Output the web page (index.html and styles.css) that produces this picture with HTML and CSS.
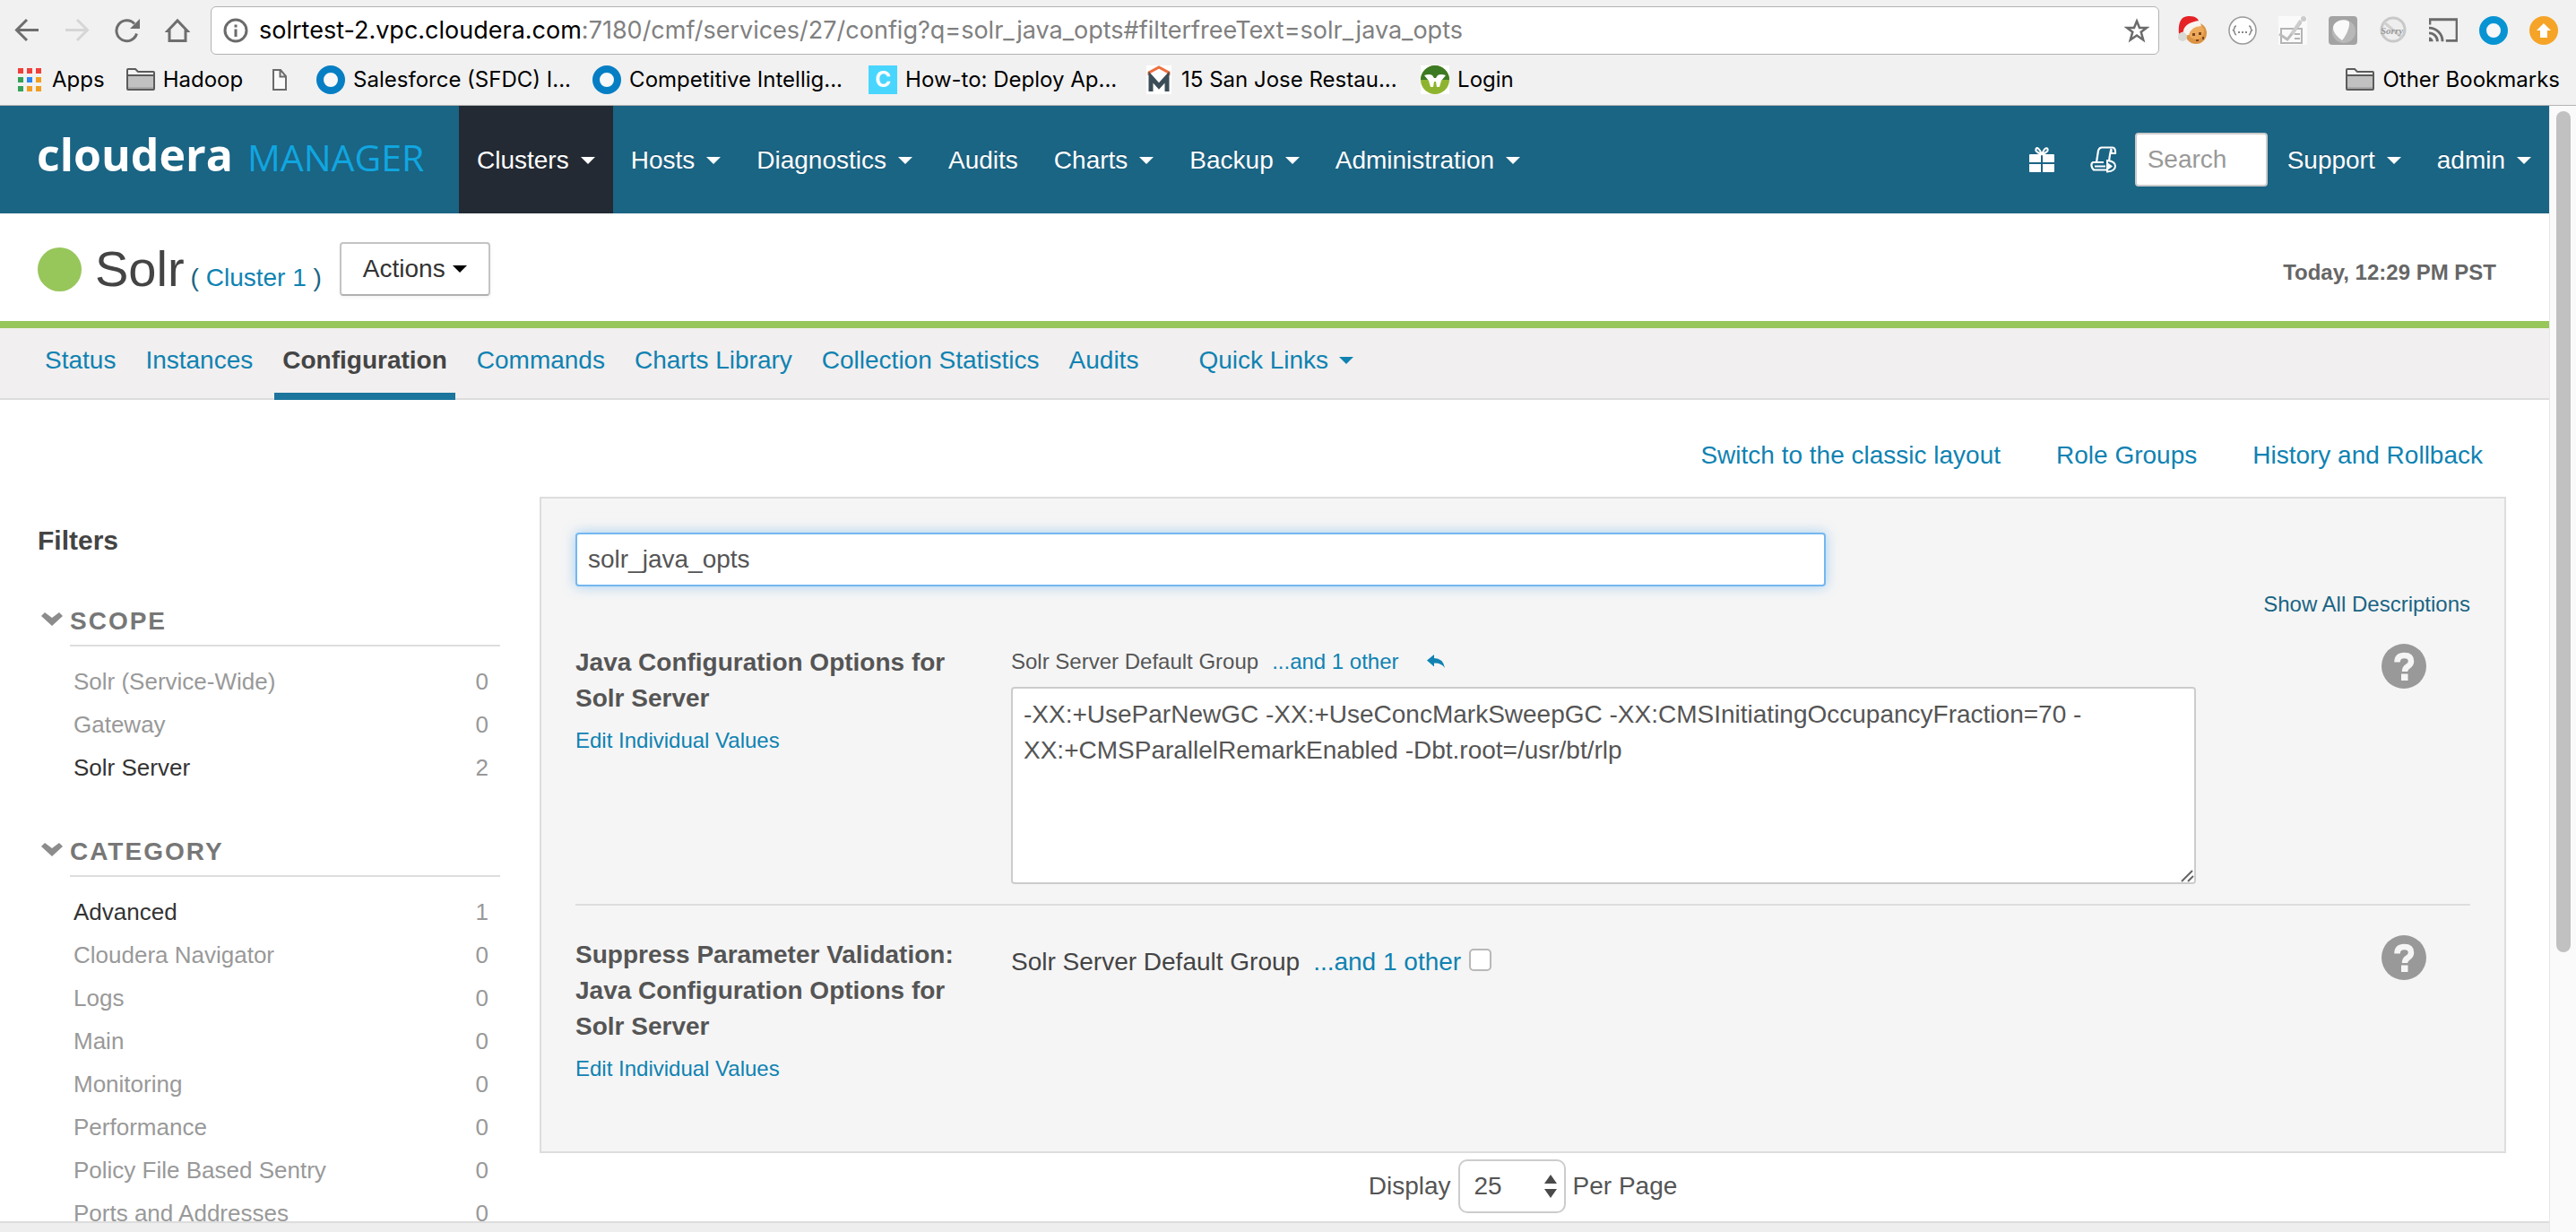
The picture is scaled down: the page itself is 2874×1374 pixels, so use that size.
FILE: index.html
```html
<!DOCTYPE html>
<html lang="en">
<head>
<meta charset="utf-8">
<title>Solr - Cloudera Manager</title>
<link rel="stylesheet" href="styles.css">
</head>
<body>
<svg class="defs" aria-hidden="true">
  <symbol id="folder" viewBox="0 0 32 26"><path d="M1 2Q1 1 2 1H10L13 4H30Q31 4 31 5V23Q31 25 29 25H3Q1 25 1 23Z" fill="#f4f4f4"/><path d="M1 9H31V24H1Z" fill="#c2c1c2"/><path d="M1 21H31V24H1Z" fill="#aaa"/><path d="M1 2Q1 1 2 1H10L13 4H30Q31 4 31 5V23Q31 24 30 24H2Q1 24 1 23ZM1 8H31" fill="none" stroke="#5b5b5b" stroke-width="2"/></symbol>
  <symbol id="ring" viewBox="0 0 32 32"><circle cx="16" cy="16" r="12" fill="#f8f8f8" stroke="currentColor" stroke-width="8"/></symbol>
  <symbol id="help" viewBox="0 0 50 50"><circle cx="25" cy="25" r="25" fill="#999"/><path d="M17.500 20.500Q17.500 13 25.500 13Q33 13 33 19.500Q33 23 29 25.500Q26 27.500 26 31" fill="none" stroke="#f5f5f5" stroke-width="6.500"/><path d="M22 33.500H29.500V41H22Z" fill="#f5f5f5"/></symbol>
  <symbol id="chevron" viewBox="0 0 24 16"><path d="M0 4L4 0L12 6L20 0L24 4L12 15Z" fill="#8c8c8c"/></symbol>
</svg>

<div class="browser">
  <div class="toolbar">
    <div class="nav-buttons">
      <button aria-label="Back"><svg viewBox="0 0 28 28"><path d="M27 13.500H3M14 2L2.500 13.500L14 25" fill="none" stroke="#6e6e6e" stroke-width="3"/></svg></button>
      <button aria-label="Forward"><svg viewBox="0 0 28 28"><path d="M1 13.500H25M14 2L25.500 13.500L14 25" fill="none" stroke="#d6d6d6" stroke-width="3"/></svg></button>
      <button aria-label="Reload"><svg viewBox="0 0 28 28"><path d="M24.500 17.500A11.500 11.500 0 1 1 22 6.500" fill="none" stroke="#6e6e6e" stroke-width="3"/><path d="M28 1V12H17Z" fill="#6e6e6e"/></svg></button>
      <button aria-label="Home"><svg viewBox="0 0 28 28"><path d="M3 14.500L14 3L25 14.500H23V25.500H5V14.500Z" fill="none" stroke="#6e6e6e" stroke-width="3"/></svg></button>
    </div>
    <div class="address">
      <svg class="info" viewBox="0 0 28 28"><circle cx="14" cy="14" r="12" fill="none" stroke="#6b6b6b" stroke-width="3"/><path d="M12.500 7.500H15.500V10.500H12.500ZM12.500 12.500H15.500V21H12.500Z" fill="#6b6b6b"/></svg>
      <div class="url" role="textbox" contenteditable="true" spellcheck="false" aria-label="Address"><span class="host">solrtest-2.vpc.cloudera.com</span>:7180/cmf/services/27/config?q=solr_java_opts#filterfreeText=solr_java_opts</div>
      <button class="star" aria-label="Bookmark this page"><svg viewBox="0 0 28 28"><path d="M14 3.500L17 11H25L18.700 15.700L21.200 24.500L14 19.500L6.800 24.500L9.300 15.700L3 11H11Z" fill="none" stroke="#6b6b6b" stroke-width="2.500"/></svg></button>
    </div>
    <div class="extensions">
      <svg viewBox="0 0 32 32"><circle cx="20" cy="19" r="12" fill="#dc9343"/><circle cx="20" cy="17" r="9" fill="#eda95a"/><path d="M16 19h3v3h-3zM23 18h3v3h-3zM20 26h3v2h-3zM27 23h2v3h-2z" fill="#7b471c"/><path d="M1 20C0 5 4 0 13 0C20 0 23 3 24 8L8 16Z" fill="#e52226"/><path d="M6 16Q8 7 24 5L26 11Q15 11 12 21L7 22Z" fill="#f8f3ee"/><circle cx="5" cy="23" r="5" fill="#d8d8d4"/></svg>
      <svg viewBox="0 0 32 32"><circle cx="16" cy="16" r="15" fill="#fff" stroke="#999" stroke-width="1.500"/><path d="M9 11Q7 11 7 13T5 16Q7 16 7 18T9 21M23 11Q25 11 25 13T27 16Q25 16 25 18T23 21" fill="none" stroke="#888" stroke-width="1.500"/><path d="M11 17h2v2h-2zM15 17h2v2h-2zM19 17h2v2h-2z" fill="#888"/></svg>
      <svg viewBox="0 0 32 32"><path d="M0 0H32V32H0Z" fill="#fafafa"/><path d="M3 14H26V30H3Z" fill="none" stroke="#b4b4b4" stroke-width="2"/><path d="M1 20L10 26L25 7" fill="none" stroke="#bbb" stroke-width="3"/><path d="M18 20h6M18 25h6" stroke="#b4b4b4" stroke-width="2"/><circle cx="28" cy="3" r="3" fill="#ccc"/><path d="M25 5L15 20" stroke="#ccc" stroke-width="4"/></svg>
      <svg viewBox="0 0 32 32"><rect width="32" height="32" rx="4" fill="#a3a3a3"/><circle cx="17" cy="17" r="13" fill="#b8b8b8"/><path d="M5 13C5 4 21 2 23 7C24 13 18 24 15 27C11 24 5 19 5 13Z" fill="#fafafa"/></svg>
      <svg viewBox="0 0 32 32"><circle cx="16" cy="15" r="13" fill="#eee" stroke="#c8c8c8" stroke-width="3"/><path d="M6 7L26 24" stroke="#d0d0d0" stroke-width="3"/><text x="2" y="20" class="sorry">Sorry</text></svg>
      <svg class="cast" viewBox="0 0 34 32"><path d="M1 9V3H33V28H20" fill="none" stroke="#6b6b6b" stroke-width="3"/><path d="M0 24V29H5A5 5 0 0 0 0 24Z" fill="#6b6b6b"/><path d="M0 19A10 10 0 0 1 10 29M0 13A16 16 0 0 1 16 29" fill="none" stroke="#6b6b6b" stroke-width="3"/></svg>
      <svg class="bright" viewBox="0 0 32 32"><use href="#ring"/></svg>
      <svg viewBox="0 0 32 32"><circle cx="16" cy="16" r="16" fill="#f5a428"/><path d="M16 8L24 16H20V24H12V16H8Z" fill="#fff"/></svg>
    </div>
  </div>
  <nav class="bookmarks">
    <a class="bm" href="#"><svg class="apps" viewBox="0 0 26 26"><path d="M0 0h6v6h-6zM10 0h6v6h-6zM20 0h6v6h-6z" fill="#f0403c"/><path d="M0 10h6v6h-6zM0 20h6v6h-6z" fill="#35a159"/><path d="M10 10h6v6h-6z" fill="#2a86f2"/><path d="M20 10h6v6h-6zM10 20h6v6h-6zM20 20h6v6h-6z" fill="#f09f23"/></svg>Apps</a>
    <a class="bm" href="#"><svg class="folder" viewBox="0 0 32 26"><use href="#folder"/></svg>Hadoop</a>
    <a class="bm" href="#" aria-label="Untitled"><svg class="doc" viewBox="0 0 18 26"><path d="M2 2H10L16 9V24H2ZM9.500 2V9.500H16" fill="#fafafa" stroke="#6b6b6b" stroke-width="2"/></svg></a>
    <a class="bm wide" href="#"><svg class="icon dark" viewBox="0 0 32 32"><use href="#ring"/></svg>Salesforce (SFDC) I...</a>
    <a class="bm wide" href="#"><svg class="icon dark" viewBox="0 0 32 32"><use href="#ring"/></svg>Competitive Intellig...</a>
    <a class="bm wide" href="#"><span class="icon tile">C</span>How-to: Deploy Ap...</a>
    <a class="bm wide" href="#"><svg class="icon" viewBox="0 0 32 32"><path d="M2 0H30V32H2Z" fill="#fff"/><path d="M5 11V8L16 2L27 8V11" fill="none" stroke="#ee6e3e" stroke-width="3"/><path d="M7 29V13L16 23L25 13V29" fill="none" stroke="#3b4d57" stroke-width="5"/></svg>15 San Jose Restau...</a>
    <a class="bm" href="#"><svg class="icon" viewBox="0 0 32 32"><path d="M0 0H32V32H0Z" fill="#fff"/><circle cx="16" cy="16" r="16" fill="#8eb42f"/><path d="M0 16A16 16 0 0 1 32 16Z" fill="#3d7a24"/><path d="M4 11Q10 9 13 11L15 14H17L19 11Q22 9 28 11L23 17L21 24H18L17 18H15L14 24H11L9 17Z" fill="#fff"/></svg>Login</a>
    <a class="bm other" href="#"><svg class="folder" viewBox="0 0 32 26"><use href="#folder"/></svg>Other Bookmarks</a>
  </nav>
</div>

<div class="viewport">
  <div class="page">
    <header class="topbar">
      <a class="logo" href="#"><span class="brand">cloudera</span><span class="product">MANAGER</span></a>
      <nav class="menu">
        <a class="active" href="#">Clusters<i class="caret"></i></a>
        <a href="#">Hosts<i class="caret"></i></a>
        <a href="#">Diagnostics<i class="caret"></i></a>
        <a href="#">Audits</a>
        <a href="#">Charts<i class="caret"></i></a>
        <a href="#">Backup<i class="caret"></i></a>
        <a href="#">Administration<i class="caret"></i></a>
      </nav>
      <div class="tools">
        <a class="tool" href="#" aria-label="Parcels"><svg viewBox="0 0 30 30"><path d="M1 10Q1 9 2 9H14V18H1ZM16 9H28Q29 9 29 10V18H16ZM1 20H14V29H2Q1 29 1 28ZM16 20H29V28Q29 29 28 29H16Z" fill="#fff"/><path d="M14.500 9Q7 6 8.500 3Q11 0 14.500 8ZM15.500 9Q23 6 21.500 3Q19 0 15.500 8Z" fill="none" stroke="#fff" stroke-width="2"/></svg></a>
        <a class="tool" href="#" aria-label="Running commands"><svg viewBox="0 0 30 30"><path d="M7 18L9 5Q10 1.500 13 1.500H25Q28.500 2 28 8H23.500V3Q22 8 21 17M15 18H3Q1 19 1.500 22T4 26.500H18" fill="none" stroke="#fff" stroke-width="2.200"/><path d="M5 22.500H17" stroke="#fff" stroke-width="2"/><path d="M19 16Q28 17 28 22Q28 28 19 28.500Z" fill="none" stroke="#fff" stroke-width="2"/><path d="M19 18V27L25 22.500Z" fill="#fff"/></svg></a>
        <input class="search" type="text" placeholder="Search" aria-label="Search">
        <nav class="menu"><a href="#">Support<i class="caret"></i></a><a href="#">admin<i class="caret"></i></a></nav>
      </div>
    </header>

    <section class="title">
      <span class="health"></span>
      <div class="heading"><h1>Solr</h1><span class="cluster">( <a href="#">Cluster 1</a> )</span></div>
      <button class="actions">Actions<i class="caret"></i></button>
      <time>Today, 12:29 PM PST</time>
    </section>

    <nav class="tabs">
      <a href="#">Status</a>
      <a href="#">Instances</a>
      <a class="active" href="#">Configuration</a>
      <a href="#">Commands</a>
      <a href="#">Charts Library</a>
      <a href="#">Collection Statistics</a>
      <a href="#">Audits</a>
      <a class="quick" href="#">Quick Links<i class="caret"></i></a>
    </nav>

    <div class="links">
      <a href="#">Switch to the classic layout</a>
      <a href="#">Role Groups</a>
      <a href="#">History and Rollback</a>
    </div>

    <div class="columns">
      <aside class="filters">
        <h2>Filters</h2>
        <section>
          <h3><svg viewBox="0 0 24 16"><use href="#chevron"/></svg><span>SCOPE</span></h3>
          <ul>
            <li><a href="#">Solr (Service-Wide)</a><span>0</span></li>
            <li><a href="#">Gateway</a><span>0</span></li>
            <li><a class="on" href="#">Solr Server</a><span>2</span></li>
          </ul>
        </section>
        <section>
          <h3><svg viewBox="0 0 24 16"><use href="#chevron"/></svg><span>CATEGORY</span></h3>
          <ul>
            <li><a class="on" href="#">Advanced</a><span>1</span></li>
            <li><a href="#">Cloudera Navigator</a><span>0</span></li>
            <li><a href="#">Logs</a><span>0</span></li>
            <li><a href="#">Main</a><span>0</span></li>
            <li><a href="#">Monitoring</a><span>0</span></li>
            <li><a href="#">Performance</a><span>0</span></li>
            <li><a href="#">Policy File Based Sentry</a><span>0</span></li>
            <li><a href="#">Ports and Addresses</a><span>0</span></li>
          </ul>
        </section>
      </aside>

      <main>
        <div class="panel">
          <input class="filter" type="text" value="solr_java_opts" aria-label="Filter settings">
          <a class="show-all" href="#">Show All Descriptions</a>
          <div class="setting">
            <div class="name">
              <label for="java-opts">Java Configuration Options for Solr Server</label>
              <a href="#">Edit Individual Values</a>
            </div>
            <div class="value">
              <div class="group">Solr Server Default Group<a href="#">...and 1 other</a><button class="undo" aria-label="Reset to default"><svg viewBox="0 0 20 16"><path d="M0 6.500L8 0V4Q18 4 20 15Q16 9 8 9.500V13.500Z" fill="#0f82b2"/></svg></button></div>
              <div class="area">
                <textarea id="java-opts" spellcheck="false">-XX:+UseParNewGC -XX:+UseConcMarkSweepGC -XX:CMSInitiatingOccupancyFraction=70 -XX:+CMSParallelRemarkEnabled -Dbt.root=/usr/bt/rlp</textarea>
                <svg class="grip" viewBox="0 0 16 16"><path d="M2 15L14 3M9 15L15 9" stroke="#666" stroke-width="2"/></svg>
              </div>
            </div>
            <button class="help" aria-label="Description"><svg viewBox="0 0 50 50"><use href="#help"/></svg></button>
          </div>
          <div class="setting last">
            <div class="name">
              <label for="suppress">Suppress Parameter Validation: Java Configuration Options for Solr Server</label>
              <a href="#">Edit Individual Values</a>
            </div>
            <div class="value">
              <div class="check">Solr Server Default Group<a href="#">...and 1 other</a><input id="suppress" type="checkbox"></div>
            </div>
            <button class="help" aria-label="Description"><svg viewBox="0 0 50 50"><use href="#help"/></svg></button>
          </div>
        </div>
        <div class="pager">
          <label for="per-page">Display</label>
          <span class="picker">
            <select id="per-page"><option>25</option><option>50</option><option>100</option></select>
            <svg viewBox="0 0 14 26"><path d="M0 10L7 0L14 10ZM0 16L7 26L14 16Z" fill="#4a4a4a"/></svg>
          </span>
          <span>Per Page</span>
        </div>
      </main>
    </div>
    <footer></footer>
  </div>
  <div class="scrollbar"><div class="thumb"></div></div>
</div>
</body>
</html>
```
FILE: styles.css
```css
* { box-sizing: border-box; }

body {
  margin: 0;
  height: 100vh;
  overflow: hidden;
  display: flex;
  flex-direction: column;
  background: #fff;
  color: #555;
  font: 28px/40px "Liberation Sans", Arial, sans-serif;
}

a { color: #0f82b2; text-decoration: none; }
button, input, select, textarea { font: inherit; color: inherit; }
button { padding: 0; border: 0; background: none; cursor: pointer; }
h1, h2, h3, ul { margin: 0; padding: 0; }
svg { display: block; flex: none; }
.defs { position: absolute; width: 0; height: 0; }

/* Browser frame */
.browser {
  flex: none;
  height: 118px;
  background: #f1f1f1;
  border-bottom: 1px solid #b2b2b2;
  color: #000;
  font-family: Inter, "Liberation Sans", sans-serif;
}
.toolbar {
  display: flex;
  align-items: center;
  padding: 7px 20px 0 16px;
}
.nav-buttons { display: flex; gap: 28px; }
.nav-buttons svg, .star svg, .info { width: 28px; height: 28px; }
.address {
  flex: 1;
  display: flex;
  align-items: center;
  height: 54px;
  margin: 0 21px 0 23px;
  padding: 0 10px 0 13px;
  background: #fff;
  border: 1px solid #b2b2b2;
  border-radius: 6px;
}
.url {
  flex: 1;
  margin-left: 12px;
  color: #808080;
  font-size: 27px;
  white-space: nowrap;
  overflow: hidden;
}
.host { color: #000; }
.extensions { display: flex; gap: 24px; }
.extensions svg { width: 32px; height: 32px; }
.sorry { font: italic bold 11px "Liberation Serif", serif; fill: #999; }
.bright { color: #0894d3; }
.bookmarks {
  display: flex;
  align-items: center;
  height: 56px;
  padding: 0 18px 0 20px;
  font-size: 24px;
}
.bm {
  display: flex;
  align-items: center;
  gap: 9px;
  margin-right: 24px;
  color: #000;
  white-space: nowrap;
}
.bm.wide { width: 284px; }
.bm.other { margin: 0 0 0 auto; }
.apps { width: 26px; height: 26px; margin-right: 3px; }
.folder { width: 32px; height: 26px; }
.doc { width: 18px; height: 26px; margin: 0 8px; }
.icon { width: 32px; height: 32px; }
.dark { color: #067ec4; }
.tile { background: #48d6ff; color: #fff; font-weight: 700; line-height: 32px; text-align: center; }

/* Page and scrollbar */
.viewport { flex: 1; min-height: 0; display: flex; }
.page { flex: 1; min-width: 0; display: flex; flex-direction: column; }
.scrollbar {
  width: 30px;
  padding: 6px 6px 0 7px;
  background: #fafafa;
  border-left: 1px solid #e7e7e7;
}
.thumb { height: 75%; background: #c1c1c1; border-radius: 8px; }

.caret {
  display: inline-block;
  border: 8px solid transparent;
  border-top-color: currentColor;
  border-bottom: 0;
}

/* Header */
.topbar {
  flex: none;
  display: flex;
  height: 120px;
  background: #1a6484;
}
.logo {
  display: flex;
  align-items: baseline;
  gap: 16px;
  width: 512px;
  padding: 22px 0 0 41px;
  font: 500 41px/64px "Open Sans", sans-serif;
}
.brand { color: #fff; font-size: 50px; font-weight: 700; }
.product { color: #10a6e0; }
.menu { display: flex; }
.menu a {
  display: flex;
  align-items: center;
  gap: 13px;
  padding: 2px 20px 0;
  color: #fff;
  text-shadow: 0 -1px 0 rgba(0, 0, 0, .25);
}
.menu .active { background: #232a34; }
.tools { display: flex; align-items: center; margin-left: auto; }
.tools .menu { align-self: stretch; }
.tool { margin-right: 39px; }
.tool svg { width: 30px; height: 30px; }
.tool + .search { margin: 0 2px 0 -19px; }
.search {
  width: 148px;
  height: 60px;
  padding: 0 12px;
  background: #fff;
  border: 2px solid #ccc;
  border-radius: 4px;
}
.search::placeholder { color: #999; opacity: 1; }

/* Service title */
.title {
  flex: none;
  display: flex;
  align-items: center;
  height: 128px;
  padding: 9px 59px 5px 42px;
  border-bottom: 8px solid #97c65b;
}
.health { width: 49px; height: 49px; border-radius: 50%; background: #97c65b; }
.heading { display: flex; align-items: baseline; gap: 7px; margin: 0 20px 0 15px; color: #1a6484; }
h1 { color: #444; font-size: 56px; font-weight: 400; line-height: 60px; }
.actions {
  display: flex;
  align-items: center;
  gap: 8px;
  height: 60px;
  padding: 0 24px;
  background: #fff;
  border: 2px solid #c4c4c4;
  border-bottom-color: #b0b0b0;
  border-radius: 4px;
  box-shadow: 0 2px 4px rgba(0, 0, 0, .05);
  color: #333;
}
.actions .caret { color: #000; }
time { margin-left: auto; padding-top: 8px; font-size: 24px; font-weight: 700; color: #666; }

.tabs {
  flex: none;
  display: flex;
  gap: 15px;
  height: 80px;
  padding: 0 41px;
  background: #f1efef;
  border-bottom: 2px solid #ddd;
}
.tabs a { display: flex; align-items: center; gap: 12px; height: 80px; padding: 0 9px; border: solid transparent; border-width: 0 0 8px; }
.tabs .active { color: #444; font-weight: 700; border-bottom-color: #1c759c; }
.tabs .quick { margin-left: 34px; }
.tabs .caret { border-top-color: #0f82b2; }

.links {
  flex: none;
  display: flex;
  justify-content: flex-end;
  gap: 62px;
  padding: 42px 74px 26px;
}

/* Body columns */
.columns {
  flex: 1;
  min-height: 0;
  overflow: hidden;
  display: grid;
  grid-template-columns: 516px 1fr;
  gap: 44px;
  padding: 0 48px 0 42px;
}
.filters { padding-top: 29px; font-size: 26px; line-height: 48px; }
h2 { color: #444; font-size: 30px; line-height: 40px; }
.filters section { margin-top: 42px; }
h3 { display: flex; gap: 8px; padding-left: 4px; color: #777; font-size: 28px; line-height: 56px; letter-spacing: 2px; }
h3 svg { width: 24px; height: 16px; margin-top: 18px; }
h3 span { flex: 1; height: 56px; border-bottom: 2px solid #ddd; }
ul { list-style: none; padding: 15px 13px 0 40px; }
li { display: flex; justify-content: space-between; color: #999; }
li a { color: #999; }
li .on { color: #333; }

.panel {
  padding: 38px 38px 72px;
  background: #f5f5f5;
  border: 2px solid #ddd;
}
.filter {
  display: block;
  width: 66%;
  height: 60px;
  padding: 0 12px;
  background: #fff;
  border: 2px solid #73b7f0;
  border-radius: 4px;
  box-shadow: 0 0 14px rgba(82, 168, 236, .5);
}
.show-all { display: block; color: #1a6484; font-size: 24px; text-align: right; }
.setting {
  display: grid;
  grid-template-columns: 486px 1fr 306px;
  align-items: start;
  padding: 24px 0 22px;
  border-bottom: 2px solid #ddd;
}
.name { padding: 1px 40px 0 0; }
.name label { display: block; font-weight: 700; }
.name a { display: block; margin-top: 7px; font-size: 24px; }
.group, .check { display: flex; align-items: center; }
.group { font-size: 24px; }
.group a, .check a { margin-left: 15px; }
.undo { margin-left: 31px; }
.undo svg { width: 20px; height: 16px; }
.area { position: relative; margin-top: 8px; }
.area textarea {
  display: block;
  width: 100%;
  height: 220px;
  padding: 9px 12px;
  background: #fff;
  border: 2px solid #ccc;
  border-radius: 4px;
  resize: none;
}
.grip { position: absolute; right: 2px; bottom: 2px; width: 16px; height: 16px; }
.help { justify-self: end; margin-right: 49px; }
.help svg { width: 50px; height: 50px; }
.setting.last { padding: 34px 0 0; border: 0; }
.setting.last .help { margin-top: -1px; }
.check { padding-top: 9px; color: #444; }
.check input {
  appearance: none;
  width: 25px;
  height: 25px;
  margin: 0 0 5px 9px;
  background: #fff;
  border: 2px solid #b8b8b8;
  border-radius: 5px;
}

.pager { display: flex; justify-content: center; align-items: center; gap: 8px; padding-top: 7px; }
.picker { position: relative; }
.picker select {
  appearance: none;
  display: block;
  width: 120px;
  height: 60px;
  padding: 0 16px;
  background: #fff;
  border: 2px solid #ccc;
  border-radius: 10px;
}
.picker svg { position: absolute; right: 10px; top: 17px; width: 14px; height: 26px; pointer-events: none; }

footer { flex: none; height: 12px; background: #eee; border-top: 2px solid #ddd; }
```
